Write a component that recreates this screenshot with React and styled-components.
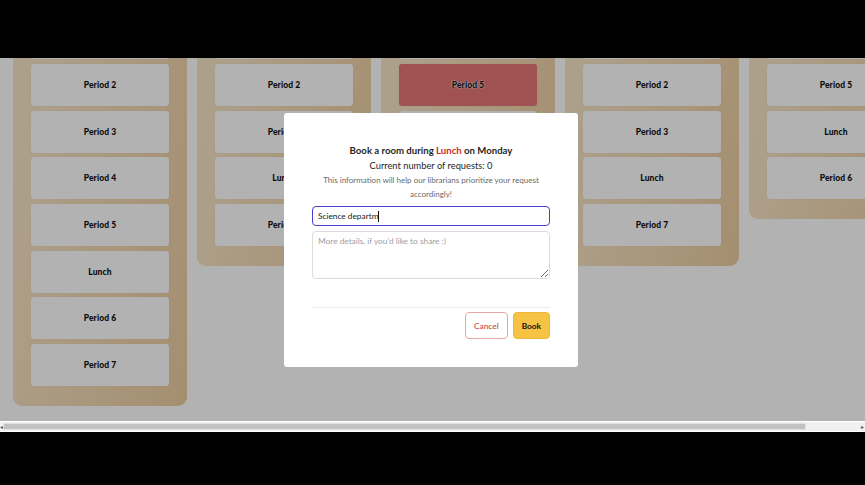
import React from "react";
import styled, { createGlobalStyle } from "styled-components";

const Global = createGlobalStyle`
  html, body { margin: 0; padding: 0; background: #000; }
  body { font-family: Lato, "Noto Sans", sans-serif; }
  * { box-sizing: border-box; }
`;

const Frame = styled.div`
  width: 865px;
  height: 485px;
  display: flex;
  flex-direction: column;
  background: #000;
  overflow: hidden;
`;

const BlackBar = styled.div`
  height: ${(p) => p.$h}px;
  flex: none;
  background: #000;
`;

const Viewport = styled.div`
  position: relative;
  height: 363px;
  flex: none;
  overflow: hidden;
  background: #fff;
`;

const Board = styled.div`
  display: flex;
  align-items: flex-start;
  gap: 10px;
  padding-left: 13px;
  margin-top: -58.67px;
`;

const Column = styled.div`
  flex: none;
  width: 174px;
  padding: 18px 18px 20px;
  border-radius: 9px;
  background: linear-gradient(100deg, #f8e8cc 0%, #f3dab5 55%, #ebcca0 100%);
  display: flex;
  flex-direction: column;
  gap: 4.67px;
`;

const Card = styled.div`
  height: 42px;
  border-radius: 3px;
  background: ${(p) => (p.$booked ? "#e57676" : "#ffffff")};
  box-shadow: 0 0 1px rgba(0, 0, 0, 0.08);
  display: flex;
  align-items: center;
  justify-content: center;
  font-family: Lato, sans-serif;
  font-weight: 900;
  font-size: 8.5px;
  letter-spacing: 0.1px;
  color: #111;
  text-shadow: 0 0 1.5px #fff, 0 0 1.5px #fff;
`;

const Overlay = styled.div`
  position: absolute;
  inset: 0;
  background: rgba(0, 0, 0, 0.3);
`;

const Modal = styled.div`
  position: absolute;
  left: 284px;
  top: 55px;
  width: 294px;
  height: 254px;
  background: #fff;
  border-radius: 3px;
  padding: 30px 28px 28px;
  display: flex;
  flex-direction: column;
`;

const Title = styled.div`
  text-align: center;
  font-size: 9.6px;
  line-height: 15px;
  font-weight: 700;
  color: #1f1f1f;
`;

const Red = styled.span`
  color: #cc2a26;
`;

const Count = styled.div`
  text-align: center;
  font-size: 9.3px;
  line-height: 15px;
  color: #262626;
`;

const Hint = styled.div`
  text-align: center;
  font-size: 8px;
  line-height: 14px;
  color: #6a6a6a;
`;

const FakeInput = styled.div`
  margin-top: 5px;
  height: 20px;
  border: 1.5px solid #4b3fd6;
  border-radius: 4px;
  padding: 0 5px;
  display: flex;
  align-items: center;
  font-size: 8.3px;
  color: #1a1a1a;
`;

const Caret = styled.span`
  display: inline-block;
  width: 1px;
  height: 11px;
  background: #111;
`;

const TextArea = styled.textarea`
  margin-top: 5px;
  height: 48px;
  width: 100%;
  border: 1px solid #dcdcdc;
  border-radius: 4px;
  padding: 4px 5px;
  font-family: Lato, sans-serif;
  font-size: 8.3px;
  resize: vertical;
  outline: none;
  &::placeholder {
    color: #9aa0a8;
  }
`;

const Divider = styled.div`
  margin-top: 28px;
  height: 1px;
  background: #ececec;
`;

const Actions = styled.div`
  margin-top: 4px;
  display: flex;
  justify-content: flex-end;
  gap: 5px;
`;

const Button = styled.button`
  height: 27px;
  padding: 0 8px;
  border-radius: 4px;
  font-family: Lato, sans-serif;
  font-size: 8.3px;
  font-weight: ${(p) => (p.$primary ? 700 : 500)};
  border: 1px solid ${(p) => (p.$primary ? "#eeb93a" : "#e7a4a4")};
  background: ${(p) => (p.$primary ? "#f6c344" : "#fff")};
  color: ${(p) => (p.$primary ? "#111" : "#c9463f")};
  cursor: pointer;
`;

const ScrollBar = styled.div`
  height: 11px;
  flex: none;
  background: #f1f1f1;
  border-top: 1px solid #fff;
  border-bottom: 1px solid #fff;
  display: flex;
  align-items: stretch;
  padding: 1px 0 1px 0;
`;

const Arrow = styled.div`
  width: ${(p) => p.$w}px;
  flex: none;
  display: flex;
  align-items: center;
  justify-content: center;
  font-size: 6px;
  color: #555;
  line-height: 1;
`;

const Thumb = styled.div`
  flex: none;
  width: 803px;
  background: #c2c2c2;
  border: 1px solid #e2e2e2;
`;

const Spacer = styled.div`
  flex: 1;
`;

const days = [
  ["Period 1", "Period 2", "Period 3", "Period 4", "Period 5", "Lunch", "Period 6", "Period 7"],
  ["Period 1", "Period 2", "Period 3", "Lunch", "Period 7"],
  ["Period 4", "Period 5", "Lunch", "Period 6", "Period 7"],
  ["Period 1", "Period 2", "Period 3", "Lunch", "Period 7"],
  ["Period 4", "Period 5", "Lunch", "Period 6"],
];

export default function App() {
  return (
    <>
      <Global />
      <Frame>
        <BlackBar $h={58} />
        <Viewport>
          <Board>
            {days.map((cards, i) => (
              <Column key={i}>
                {cards.map((c, j) => (
                  <Card key={j} $booked={i === 2 && c === "Period 5"}>
                    {c}
                  </Card>
                ))}
              </Column>
            ))}
          </Board>
          <Overlay />
          <Modal>
            <Title>
              Book a room during <Red>Lunch</Red> on Monday
            </Title>
            <Count>Current number of requests: 0</Count>
            <Hint>
              This information will help our librarians prioritize your request accordingly!
            </Hint>
            <FakeInput>
              Science departm<Caret />
            </FakeInput>
            <TextArea placeholder="More details, if you'd like to share :)" />
            <Divider />
            <Actions>
              <Button>Cancel</Button>
              <Button $primary>Book</Button>
            </Actions>
          </Modal>
        </Viewport>
        <ScrollBar>
          <Arrow $w={3}>◂</Arrow>
          <Thumb />
          <Spacer />
          <Arrow $w={5}>▸</Arrow>
        </ScrollBar>
        <BlackBar $h={53} />
      </Frame>
    </>
  );
}
